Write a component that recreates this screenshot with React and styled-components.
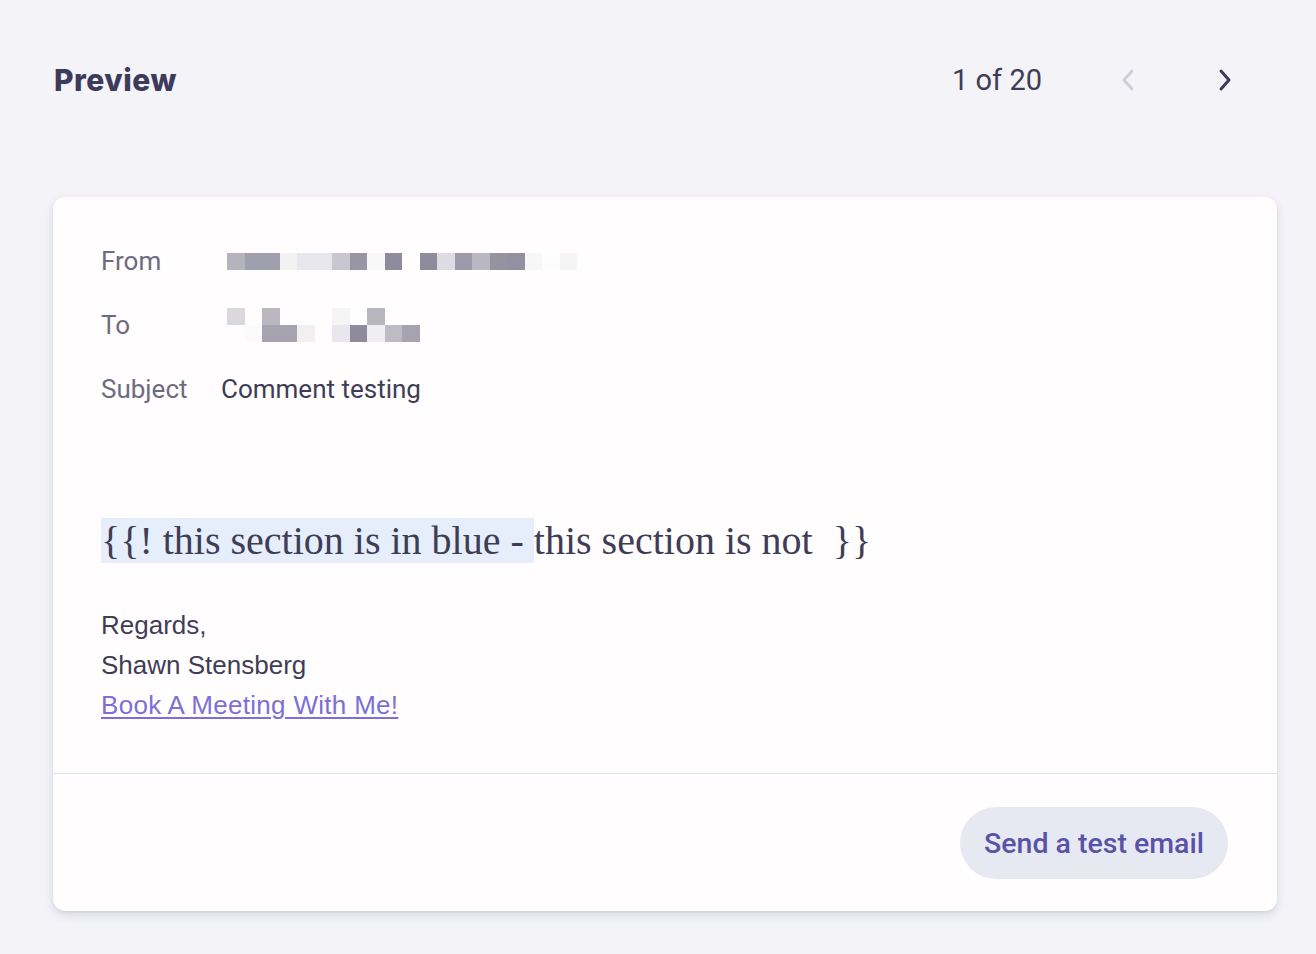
import styled, { createGlobalStyle } from 'styled-components'

const GlobalStyle = createGlobalStyle`
  html, body {
    margin: 0;
    background: #f3f3f8;
  }
  body {
    font-family: Roboto, "Liberation Sans", sans-serif;
    color: #3f3d56;
  }
`

const Page = styled.div`
  padding: 0 39px 43px 53px;
  min-height: 954px;
  box-sizing: border-box;
`

const Header = styled.header`
  display: flex;
  align-items: center;
  height: 36px;
  padding: 62px 32px 0 1px;
  margin-bottom: 99px;
`

const Title = styled.h1`
  margin: 0;
  flex: 1;
  font-family: Inter, Lato, sans-serif;
  font-weight: 800;
  font-size: 30px;
  letter-spacing: 0.5px;
  color: #3d3a5c;
`

const Counter = styled.span`
  font-size: 29px;
  color: #3f3d56;
  margin-right: 66px;
`

const NavButton = styled.button`
  display: flex;
  align-items: center;
  justify-content: center;
  width: 40px;
  height: 40px;
  padding: 0;
  border: 0;
  background: none;
  color: ${({ disabled }) => (disabled ? '#cfcfdb' : '#3d3a5c')};
  cursor: ${({ disabled }) => (disabled ? 'default' : 'pointer')};
  & + & {
    margin-left: 57px;
  }
`

const Card = styled.section`
  background: #fffdfd;
  border-radius: 12px;
  box-shadow: 0 4px 10px rgba(60, 60, 100, 0.14), 0 1px 2px rgba(60, 60, 100, 0.08);
`

const CardBody = styled.div`
  padding: 32px 48px 48px;
`

const Field = styled.div`
  display: grid;
  grid-template-columns: 120px 1fr;
  align-items: center;
  height: 64px;
`

const Label = styled.span`
  font-size: 26px;
  color: #6d6b80;
`

const Value = styled.span`
  font-size: 26px;
  color: #3f3d56;
`

const Pixels = styled.div`
  display: grid;
  grid-template-columns: repeat(${({ cols }) => cols}, 17.5px);
  grid-auto-rows: 17px;
  margin-left: 6px;
`

const Pixel = styled.span`
  background: ${({ c }) => c};
`

const Message = styled.p`
  margin: 98px 0 42px;
  font-family: "Liberation Serif", "Times New Roman", serif;
  font-size: 40px;
  line-height: 44px;
  color: #3f3d56;
  white-space: pre;
`

const Highlight = styled.span`
  background: #e6eefc;
`

const Signature = styled.div`
  font-family: "Liberation Sans", Arial, sans-serif;
  font-size: 26px;
  line-height: 40px;
  color: #3f3d56;
`

const Link = styled.a`
  color: #7c70d8;
  text-decoration: underline;
  text-underline-offset: 3px;
  letter-spacing: 0.3px;
`

const Footer = styled.div`
  display: flex;
  justify-content: flex-end;
  border-top: 1px solid #dfe2ee;
  padding: 33px 49px 32px;
`

const SendButton = styled.button`
  height: 72px;
  padding: 0 24px;
  border: 0;
  border-radius: 36px;
  background: #e7e9f2;
  color: #5953a8;
  font-family: Roboto, sans-serif;
  font-weight: 500;
  font-size: 28.5px;
  cursor: pointer;
`

const fromPixels = [
  '#b4b3be', '#a09fae', '#a09fae', '#f2f2f2', '#e8e7ee', '#e8e7ee', '#c8c7d0', '#9895a5',
  '#f8f8f8', '#8e8c9c', 'transparent', '#8e8c9c', '#dddce5', '#9d9bab', '#b9b8c2', '#94939f',
  '#9390a1', '#f7f7f7', '#fdfdfd', '#f5f5f5',
]

const toPixels = [
  '#d9d8df', 'transparent', '#b9b8c1', 'transparent', 'transparent', 'transparent', '#f5f5f5', 'transparent', '#b8b7c0', 'transparent', 'transparent',
  'transparent', '#fbfbfb', '#a5a3af', '#a5a3af', '#f0f0f0', 'transparent', '#e8e7ee', '#8e8c9c', '#eeeef3', '#bdbcc4', '#a5a3af',
]

function Chevron({ dir }) {
  return (
    <svg width="28" height="28" viewBox="0 0 28 28" fill="none" stroke="currentColor"
      strokeWidth="3" strokeLinecap="round" strokeLinejoin="round">
      <path d={dir === 'left' ? 'M18 5 L10 14 L18 23' : 'M10 5 L18 14 L10 23'} />
    </svg>
  )
}

export default function App() {
  return (
    <>
      <GlobalStyle />
      <Page>
        <Header>
          <Title>Preview</Title>
          <Counter>1 of 20</Counter>
          <NavButton disabled aria-label="Previous"><Chevron dir="left" /></NavButton>
          <NavButton aria-label="Next"><Chevron dir="right" /></NavButton>
        </Header>
        <Card>
          <CardBody>
            <Field>
              <Label>From</Label>
              <Pixels cols={20}>
                {fromPixels.map((c, i) => <Pixel key={i} c={c} />)}
              </Pixels>
            </Field>
            <Field>
              <Label>To</Label>
              <Pixels cols={11}>
                {toPixels.map((c, i) => <Pixel key={i} c={c} />)}
              </Pixels>
            </Field>
            <Field>
              <Label>Subject</Label>
              <Value>Comment testing</Value>
            </Field>
            <Message>
              <Highlight>{'{{! this section is in blue - '}</Highlight>
              {'this section is not  }}'}
            </Message>
            <Signature>
              <div>Regards,</div>
              <div>Shawn Stensberg</div>
              <Link href="#">Book A Meeting With Me!</Link>
            </Signature>
          </CardBody>
          <Footer>
            <SendButton>Send a test email</SendButton>
          </Footer>
        </Card>
      </Page>
    </>
  )
}
